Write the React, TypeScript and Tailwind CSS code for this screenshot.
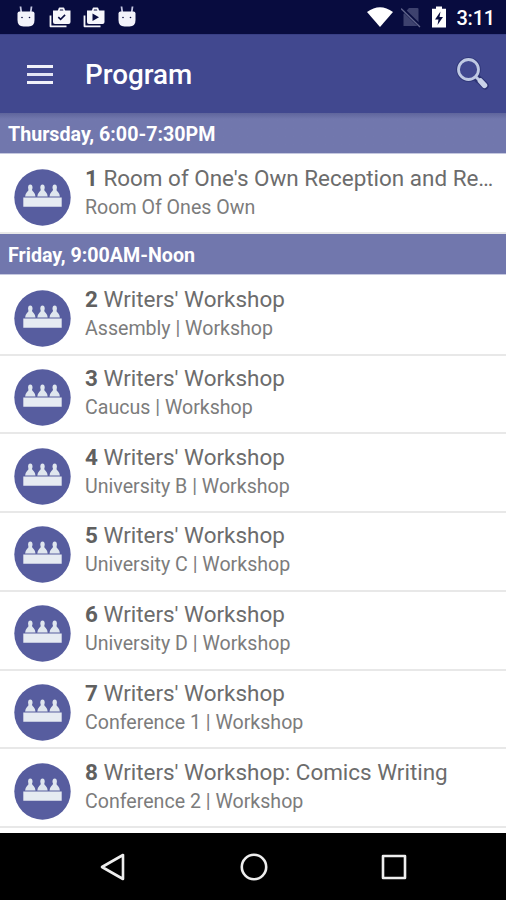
import React from 'react';

type Session = { id: number; title: string; detail: string };
type Section = { heading: string; sessions: Session[] };

const sections: Section[] = [
  {
    heading: 'Thursday, 6:00-7:30PM',
    sessions: [{ id: 1, title: "Room of One's Own Reception and Re…", detail: 'Room Of Ones Own' }],
  },
  {
    heading: 'Friday, 9:00AM-Noon',
    sessions: [
      { id: 2, title: "Writers' Workshop", detail: 'Assembly | Workshop' },
      { id: 3, title: "Writers' Workshop", detail: 'Caucus | Workshop' },
      { id: 4, title: "Writers' Workshop", detail: 'University B | Workshop' },
      { id: 5, title: "Writers' Workshop", detail: 'University C | Workshop' },
      { id: 6, title: "Writers' Workshop", detail: 'University D | Workshop' },
      { id: 7, title: "Writers' Workshop", detail: 'Conference 1 | Workshop' },
      { id: 8, title: "Writers' Workshop: Comics Writing", detail: 'Conference 2 | Workshop' },
    ],
  },
];

function DroidIcon() {
  return (
    <svg className="w-[20px] h-[22px]" viewBox="0 0 20 22">
      <path d="M4.500 .5l.8 6M15.500 .5l-.8 6" stroke="#c4c6e0" strokeWidth="1.800" />
      <path d="M1.500 7.500Q1.500 5.500 3.500 5.500h13q2 0 2 2V14q0 6.500-6 6.500h-5q-6 0-6-6.500z" fill="#f3f3fa" />
      <circle cx="6" cy="11.500" r=".8" fill="#0a0d40" />
      <circle cx="13.500" cy="11.500" r=".8" fill="#0a0d40" />
    </svg>
  );
}

function BagIcon({ play }: { play?: boolean }) {
  return (
    <svg className="w-[22px] h-[22px]" viewBox="0 0 22 22" fill="none">
      <path d="M1.500 9.500v10.800h16" stroke="#f6f6fb" strokeWidth="1.800" strokeLinejoin="round" />
      <path d="M9.500 5.500L10.500 2.500h4l1 3" stroke="#f6f6fb" strokeWidth="1.800" strokeLinejoin="round" />
      <path d="M4 4.500h17.500V16q0 2-2 2H6q-2 0-2-2z" fill="#f6f6fb" />
      {play ? (
        <path d="M9.500 7.500v7.500l6.500-3.700z" fill="#0a0d40" />
      ) : (
        <path d="M9.300 11.200l2.300 2.200 4.500-4.500" stroke="#0a0d40" strokeWidth="1.600" />
      )}
    </svg>
  );
}

function StatusBar() {
  return (
    <div className="flex h-[34px] shrink-0 items-center bg-[#080c3f] pl-4 pr-[11px] text-white">
      <DroidIcon />
      <div className="ml-[13px] flex gap-[12px]">
        <BagIcon />
        <BagIcon play />
      </div>
      <div className="ml-[12px]">
        <DroidIcon />
      </div>
      <svg className="ml-auto h-[22px] w-[28px]" viewBox="0 0 28 22">
        <path d="M1 6Q14-3.500 27 6L14 21z" fill="#fff" />
      </svg>
      <svg className="ml-[7px] h-[22px] w-[20px]" viewBox="0 0 20 22">
        <path d="M8 2h8.500q1 0 1 1v17h-15V8z" fill="#3e426e" />
        <path d="M0 1.500l19.500 19" stroke="#080c3f" strokeWidth="3.500" />
        <path d="M0 2.500l19 18.500" stroke="#62668c" strokeWidth="1.300" />
      </svg>
      <svg className="ml-[10px] h-[22px] w-[16px]" viewBox="0 0 16 22">
        <path d="M5 .5h6v2.300h4V21.500H1V2.800h4z" fill="#fff" />
        <path d="M9.500 5.500l-5.500 8h3.500L6.500 19l5.500-8H8.500z" fill="#080c3f" />
      </svg>
      <span className="ml-[9px] pt-0.5 text-[20px] font-medium leading-none tracking-[-0.2px]">3:11</span>
    </div>
  );
}

function AppBar() {
  return (
    <header className="flex h-[79px] shrink-0 items-center border-t border-[#383f85] bg-[#41488f] pl-[27px] pr-[16px]">
      <button className="flex w-[26px] flex-col gap-[5px]" aria-label="Menu">
        <span className="h-[3px] w-full bg-[#f0f1fa]" />
        <span className="h-[3px] w-full bg-[#e3e5f4]" />
        <span className="h-[3px] w-full bg-[#f0f1fa]" />
      </button>
      <h1 className="ml-[32px] pt-0.5 text-[27.800px] font-medium leading-9 text-white">Program</h1>
      <svg className="ml-auto h-[34px] w-[34px]" viewBox="0 0 34 34" fill="none">
        <circle cx="12.500" cy="12.500" r="10" stroke="#2c3374" strokeWidth="4.500" />
        <path d="M19.500 19.500l3 3M24.500 24l4.500 4.700" stroke="#2c3374" strokeWidth="7.500" strokeLinecap="round" />
        <circle cx="12.500" cy="12.500" r="10" fill="#41488f" stroke="#bfc9e3" strokeWidth="2.800" />
        <path d="M19.500 19.500l4 4" stroke="#bfc9e3" strokeWidth="3" />
        <path d="M24.500 24l4 4.300" stroke="#c9d2e8" strokeWidth="5.500" strokeLinecap="round" />
      </svg>
    </header>
  );
}

function PanelIcon() {
  return (
    <svg className="h-[57px] w-[57px] shrink-0" viewBox="0 0 57 57">
      <circle cx="28.500" cy="28.500" r="28.200" fill="#575d9f" />
      {[16.300, 28.500, 40.700].map((x) => (
        <g key={x} transform={`translate(${x} 0)`} fill="#dfe6ee">
          <ellipse cx="0" cy="18.500" rx="2.200" ry="2.900" />
          <path d="M-1.500 20h3Q1.800 22 3.300 23 5 24.500 5.200 27.500H-5.200Q-5 24.500-3.300 23-1.800 22-1.500 20z" />
        </g>
      ))}
      <path d="M9.300 28.500h38.400v9.300H9.300z" fill="#e6ebf2" />
    </svg>
  );
}

function SessionRow({ session }: { session: Session }) {
  return (
    <li className="flex h-[78.750px] items-start border-b-2 border-[#e8e8e8] pl-[14px] pr-[8px] pt-[13.250px]">
      <PanelIcon />
      <div className="-mt-[6px] ml-[14px] min-w-0 flex-1 whitespace-nowrap">
        <div className="text-[22.450px] leading-[30px] text-[#6c6c6c]">
          <b className="font-bold text-[#606060]">{session.id}</b> {session.title}
        </div>
        <div className="text-[19.600px] leading-[29.500px] text-[#7c7c7c]">{session.detail}</div>
      </div>
    </li>
  );
}

function NavBar() {
  return (
    <nav className="flex h-[67px] shrink-0 items-center justify-center gap-[112.500px] bg-black pl-px">
      <svg className="h-7 w-7" viewBox="0 0 28 28" fill="none" stroke="#eee" strokeWidth="2.600" strokeLinejoin="round">
        <path d="M24 2v24L3 14z" />
      </svg>
      <svg className="h-7 w-7" viewBox="0 0 28 28" fill="none" stroke="#eee" strokeWidth="2.600">
        <circle cx="14" cy="14" r="12.200" />
      </svg>
      <svg className="h-7 w-7" viewBox="0 0 28 28" fill="none" stroke="#eee" strokeWidth="2.600" strokeLinejoin="round">
        <path d="M3 3h22v22H3z" />
      </svg>
    </nav>
  );
}

export default function App() {
  return (
    <div className="flex h-[900px] w-[506px] flex-col overflow-hidden bg-white font-['Roboto',sans-serif]">
      <StatusBar />
      <AppBar />
      <main className="min-h-0 flex-1 overflow-hidden">
        {sections.map((section, i) => (
          <section key={section.heading}>
            <h2
              className={`flex h-[41px] items-center border-b border-[#c5c8df] pl-2 text-[19.650px] font-bold text-white ${
                i === 0 ? 'bg-linear-to-b from-[#5f659c] to-[#7177ad] to-[6px] pt-[3px]' : 'bg-[#7177ad] pt-[2px]'
              }`}
            >
              {section.heading}
            </h2>
            <ul className="pt-[1.500px]">
              {section.sessions.map((session) => (
                <SessionRow key={session.id} session={session} />
              ))}
            </ul>
          </section>
        ))}
      </main>
      <NavBar />
    </div>
  );
}
